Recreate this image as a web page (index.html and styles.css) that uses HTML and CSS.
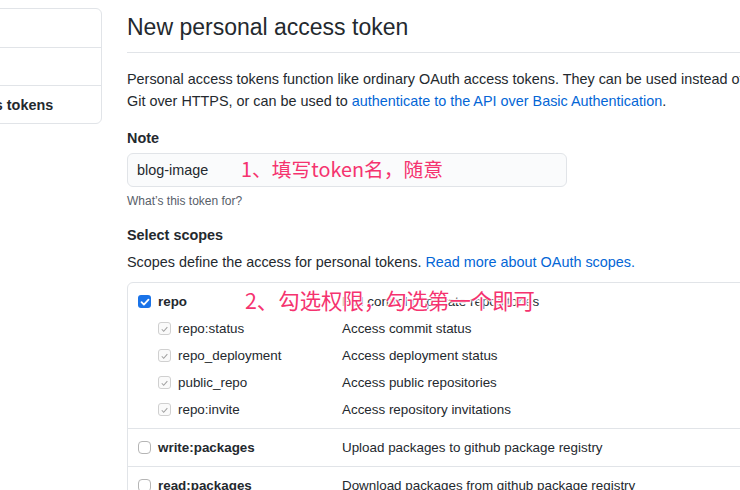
FILE: index.html
```html
<!DOCTYPE html>
<html lang="en">
<head>
<meta charset="utf-8">
<title>New personal access token</title>
<link rel="stylesheet" href="styles.css">
</head>
<body>
<div class="page">
  <nav class="sidebar">
    <a class="side-item">GitHub Apps</a>
    <a class="side-item">OAuth Apps</a>
    <a class="side-item active">Personal access tokens</a>
  </nav>
  <main class="main">
    <h2 class="title">New personal access token</h2>
    <p class="intro">Personal access tokens function like ordinary OAuth access tokens. They can be used instead of a password for<br>Git over HTTPS, or can be used to <a class="link">authenticate to the API over Basic Authentication</a>.</p>

    <label class="label note-label">Note</label>
    <div class="input-wrap">
      <div class="input">blog-image</div>
      <span class="note note-1">1、填写token名，随意</span>
    </div>
    <p class="hint">What’s this token for?</p>

    <h3 class="label scopes-title">Select scopes</h3>
    <p class="scopes-desc">Scopes define the access for personal tokens. <a class="link">Read more about OAuth scopes.</a></p>

    <div class="scopes">
      <div class="group">
        <div class="row">
          <span class="cb cb-on"><svg viewBox="0 0 12 12"><path d="M2.5 6.2l2.4 2.4 4.6-5" fill="none" stroke="#fff" stroke-width="1.8" stroke-linecap="round" stroke-linejoin="round"/></svg></span>
          <span class="name bold">repo</span>
          <span class="desc">Full control of private repositories</span>
          <span class="note note-2">2、勾选权限，勾选第一个即可</span>
        </div>
        <div class="row sub">
          <span class="cb cb-dis"><svg viewBox="0 0 12 12"><path d="M3 6.3l2.1 2.2 4-4.6" fill="none" stroke="#a0a0a0" stroke-width="1.1"/></svg></span>
          <span class="name">repo:status</span>
          <span class="desc">Access commit status</span>
        </div>
        <div class="row sub">
          <span class="cb cb-dis"><svg viewBox="0 0 12 12"><path d="M3 6.3l2.1 2.2 4-4.6" fill="none" stroke="#a0a0a0" stroke-width="1.1"/></svg></span>
          <span class="name">repo_deployment</span>
          <span class="desc">Access deployment status</span>
        </div>
        <div class="row sub">
          <span class="cb cb-dis"><svg viewBox="0 0 12 12"><path d="M3 6.3l2.1 2.2 4-4.6" fill="none" stroke="#a0a0a0" stroke-width="1.1"/></svg></span>
          <span class="name">public_repo</span>
          <span class="desc">Access public repositories</span>
        </div>
        <div class="row sub">
          <span class="cb cb-dis"><svg viewBox="0 0 12 12"><path d="M3 6.3l2.1 2.2 4-4.6" fill="none" stroke="#a0a0a0" stroke-width="1.1"/></svg></span>
          <span class="name">repo:invite</span>
          <span class="desc">Access repository invitations</span>
        </div>
      </div>
      <div class="group">
        <div class="row">
          <span class="cb cb-off"></span>
          <span class="name bold">write:packages</span>
          <span class="desc">Upload packages to github package registry</span>
        </div>
      </div>
      <div class="group">
        <div class="row">
          <span class="cb cb-off"></span>
          <span class="name bold">read:packages</span>
          <span class="desc">Download packages from github package registry</span>
        </div>
      </div>
    </div>
  </main>
</div>
</body>
</html>
```

FILE: styles.css
```css
html, body {
  margin: 0;
  padding: 0;
  background: #fff;
  overflow: hidden;
}
body {
  width: 740px;
  height: 490px;
  font-family: "Liberation Sans", Arial, sans-serif;
  color: #24292e;
  font-size: 14.4px;
}
.page {
  display: flex;
  align-items: flex-start;
  gap: 25px;
  margin-left: -130px;
  padding-top: 8px;
  width: 1100px;
}
.sidebar {
  flex: 0 0 232px;
  box-sizing: border-box;
  border: 1px solid #e1e4e8;
  border-radius: 6px;
  display: flex;
  flex-direction: column;
}
.side-item {
  height: 38px;
  box-sizing: border-box;
  display: flex;
  align-items: center;
  padding-left: 19px;
  color: #24292e;
  font-size: 14.4px;
}
.side-item + .side-item {
  border-top: 1px solid #e1e4e8;
}
.side-item.active {
  font-weight: 700;
}
.main {
  flex: 0 0 820px;
}
.title {
  margin: 0;
  font-size: 23px;
  font-weight: 400;
  line-height: 32px;
  padding: 3px 0 9px;
  border-bottom: 1px solid #e1e4e8;
}
.intro {
  margin: 15px 0 0;
  line-height: 22px;
  white-space: nowrap;
}
.link {
  color: #0366d6;
  text-decoration: none;
}
.label {
  display: block;
  margin: 14px 0 0;
  font-size: 14.4px;
  font-weight: 700;
  line-height: 21px;
}
.note-label {
  margin-top: 16px;
}
.input-wrap {
  position: relative;
  margin-top: 4px;
  width: 440px;
}
.input {
  box-sizing: border-box;
  height: 34px;
  border: 1px solid #e1e4e8;
  border-radius: 6px;
  background: #fafbfc;
  padding: 0 9px;
  display: flex;
  align-items: center;
  font-size: 14.4px;
}
.note {
  position: absolute;
  font-family: "Noto Sans CJK SC", "Liberation Sans", sans-serif;
  color: #f5336f;
  white-space: nowrap;
}
.note-1 {
  left: 114px;
  top: 2px;
  font-size: 19.8px;
  line-height: 28px;
}
.hint {
  margin: 5px 0 0;
  font-size: 12px;
  line-height: 18px;
  color: #586069;
}
.scopes-title {
  margin-top: 15px;
}
.scopes-desc {
  margin: 6px 0 0;
  line-height: 21px;
}
.scopes {
  margin-top: 9px;
  border: 1px solid #e1e4e8;
  border-radius: 6px;
  width: 800px;
}
.group {
  padding: 5px 0 5px 10px;
}
.group + .group {
  border-top: 1px solid #e1e4e8;
}
.row {
  position: relative;
  display: grid;
  grid-template-columns: 20px 184px 1fr;
  align-items: center;
  height: 27px;
  font-size: 13.4px;
}
.row.sub {
  margin-left: 20px;
  grid-template-columns: 20px 164px 1fr;
}
.bold {
  font-weight: 700;
}
.desc {
  color: #24292e;
}
.cb {
  box-sizing: border-box;
  width: 13px;
  height: 13px;
  border-radius: 3px;
  display: flex;
  align-items: center;
  justify-content: center;
}
.cb svg {
  width: 12px;
  height: 12px;
}
.cb-on {
  background: #1a73e8;
}
.cb-dis {
  border: 1px solid #d0d0d0;
  background: #fafafa;
}
.cb-off {
  border: 1px solid #b5b5b5;
  border-radius: 4px;
  background: #fff;
}
.note-2 {
  left: 107px;
  top: -3px;
  font-size: 21.4px;
  line-height: 30px;
  text-shadow: 0 0 2px #fff, 0 0 2px #fff, 0 0 3px #fff, 1px 1px 1px #fff, -1px -1px 1px #fff;
}
```
